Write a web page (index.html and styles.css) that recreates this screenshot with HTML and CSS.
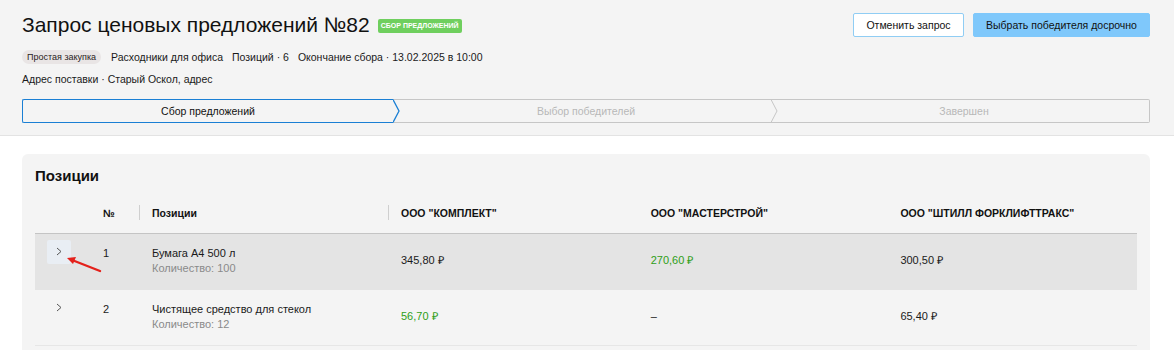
FILE: index.html
```html
<!DOCTYPE html>
<html lang="ru">
<head>
<meta charset="utf-8">
<title>Запрос ценовых предложений №82</title>
<link rel="stylesheet" href="styles.css">
</head>
<body>
<header class="head">
  <div class="title-row">
    <div class="title-wrap">
      <h1 class="title">Запрос ценовых предложений №82</h1>
      <span class="badge">СБОР ПРЕДЛОЖЕНИЙ</span>
    </div>
    <div class="actions">
      <button class="btn btn-outline">Отменить запрос</button>
      <button class="btn btn-primary">Выбрать победителя досрочно</button>
    </div>
  </div>
  <div class="meta">
    <span class="tag">Простая закупка</span>
    <span>Расходники для офиса</span>
    <span>Позиций · 6</span>
    <span>Окончание сбора · 13.02.2025 в 10:00</span>
  </div>
  <div class="address">Адрес поставки · Старый Оскол, адрес</div>
  <div class="stepper">
    <div class="step step-active">Сбор предложений</div>
    <svg class="sep" width="8" height="24" viewBox="0 0 8 24"><line x1="0" y1="0.5" x2="8" y2="0.5" stroke="#c6c6c6"/><line x1="0" y1="23.5" x2="8" y2="23.5" stroke="#c6c6c6"/><polyline points="0,0.5 6,12 0,23.5" fill="none" stroke="#1a7fd4" stroke-width="1.3"/></svg>
    <div class="step">Выбор победителей</div>
    <svg class="sep" width="8" height="24" viewBox="0 0 8 24"><line x1="0" y1="0.5" x2="8" y2="0.5" stroke="#c6c6c6"/><line x1="0" y1="23.5" x2="8" y2="23.5" stroke="#c6c6c6"/><polyline points="0,0.5 6,12 0,23.5" fill="none" stroke="#c6c6c6" stroke-width="1"/></svg>
    <div class="step step-last">Завершен</div>
  </div>
</header>
<main class="content">
  <section class="card">
    <h2 class="card-title">Позиции</h2>
    <table class="tbl">
      <colgroup>
        <col class="c-exp"><col class="c-num"><col class="c-name"><col class="c-sup"><col class="c-sup"><col class="c-sup">
      </colgroup>
      <thead>
        <tr>
          <th></th>
          <th><span class="th-in">№</span></th>
          <th class="div-l"><span class="th-in">Позиции</span></th>
          <th class="div-l"><span class="th-in">ООО "КОМПЛЕКТ"</span></th>
          <th><span class="th-in">ООО "МАСТЕРСТРОЙ"</span></th>
          <th><span class="th-in">ООО "ШТИЛЛ ФОРКЛИФТТРАКС"</span></th>
        </tr>
      </thead>
      <tbody>
        <tr class="row-hl">
          <td class="exp">
            <span class="exp-btn exp-btn-active"><svg width="6" height="9" viewBox="0 0 6 9"><polyline points="1,1 5,4.5 1,8" fill="none" stroke="#555" stroke-width="1"/></svg></span>
            <svg class="annot" width="40" height="20" viewBox="0 0 40 20"><line x1="36" y1="17" x2="8" y2="6" stroke="#e4211b" stroke-width="2.4" stroke-linecap="round"/><polygon points="3,4 12,3 9,10" fill="#e4211b"/></svg>
          </td>
          <td class="num">1</td>
          <td class="name"><div>Бумага А4 500 л</div><div class="qty">Количество: 100</div></td>
          <td class="price">345,80 ₽</td>
          <td class="price best">270,60 ₽</td>
          <td class="price">300,50 ₽</td>
        </tr>
        <tr>
          <td class="exp">
            <span class="exp-btn"><svg width="6" height="9" viewBox="0 0 6 9"><polyline points="1,1 5,4.5 1,8" fill="none" stroke="#555" stroke-width="1"/></svg></span>
          </td>
          <td class="num">2</td>
          <td class="name"><div>Чистящее средство для стекол</div><div class="qty">Количество: 12</div></td>
          <td class="price best">56,70 ₽</td>
          <td class="price">–</td>
          <td class="price">65,40 ₽</td>
        </tr>
      </tbody>
    </table>
  </section>
</main>
</body>
</html>
```
FILE: styles.css
```css
* { box-sizing: border-box; }
html, body { margin: 0; padding: 0; }
body {
  font-family: "Liberation Sans", Arial, sans-serif;
  color: #1a1a1a;
  background: #ffffff;
  font-size: 11px;
}
.head {
  background: #f4f4f4;
  border-bottom: 1px solid #e3e3e3;
  padding: 12px 24px 12px 22px;
}
.title-row {
  display: flex;
  justify-content: space-between;
  align-items: flex-start;
}
.title-wrap {
  display: flex;
  align-items: center;
  gap: 8px;
}
.title {
  margin: 0;
  font-size: 21px;
  font-weight: 400;
  line-height: 26px;
  color: #111;
}
.badge {
  background: #6fcf5e;
  color: #fff;
  font-size: 7px;
  font-weight: 700;
  line-height: 14px;
  padding: 0 3px;
  border-radius: 2px;
  margin-top: 2px;
}
.actions {
  display: flex;
  gap: 9px;
  padding-top: 1px;
}
.btn {
  font-family: inherit;
  font-size: 10.5px;
  height: 24px;
  border-radius: 2px;
  color: #111;
  cursor: pointer;
}
.btn-outline {
  background: #fff;
  border: 1px solid #90cdf4;
  width: 111px;
}
.btn-primary {
  background: #7fc8fb;
  border: 1px solid #7fc8fb;
  width: 177px;
}
.meta {
  display: flex;
  align-items: center;
  gap: 9px;
  margin-top: 11px;
  height: 16px;
  font-size: 10.5px;
}
.tag {
  background: #e9e5e5;
  color: #2a2222;
  font-size: 9px;
  line-height: 14px;
  padding: 0 5px;
  border-radius: 7px;
  margin-right: 1px;
}
.address {
  margin-top: 6px;
  line-height: 16px;
  font-size: 10.5px;
}
.stepper {
  display: flex;
  margin-top: 12px;
  height: 24px;
}
.step {
  flex: 1;
  display: flex;
  align-items: center;
  justify-content: center;
  border-top: 1px solid #c6c6c6;
  border-bottom: 1px solid #c6c6c6;
  color: #b8b8b8;
  font-size: 10.5px;
}
.step-active {
  border: 1.3px solid #1a7fd4;
  border-right: 0;
  border-radius: 2px 0 0 2px;
  color: #111;
}
.step-last {
  border-right: 1px solid #c6c6c6;
  border-radius: 0 2px 2px 0;
}
.sep { flex: none; display: block; }
.content {
  padding: 18px 24px 0 22px;
}
.card {
  background: #f4f4f4;
  border-radius: 6px;
  padding: 12px 13px 20px;
}
.card-title {
  margin: 0 0 7px;
  font-size: 15px;
  line-height: 20px;
  font-weight: 700;
  color: #111;
}
.tbl {
  width: 100%;
  border-collapse: collapse;
  table-layout: fixed;
}
.c-exp { width: 55px; }
.c-num { width: 49px; }
.c-name { width: 249px; }
.c-sup { width: 249.7px; }
.tbl th {
  height: 40px;
  text-align: left;
  font-weight: 700;
  font-size: 10.5px;
  padding: 0 13px;
  border-bottom: 1px solid #c4c4c4;
  color: #111;
}
.tbl th.div-l { background: linear-gradient(#cfcfcf, #cfcfcf) no-repeat left center / 1px 15px; }
.tbl td {
  vertical-align: top;
  padding: 12px 13px 13px;
  font-size: 11px;
  line-height: 15px;
  border-bottom: 1px solid #e6e6e6;
}
.row-hl td { background: #e4e4e4; border-bottom-color: #e4e4e4; }
.tbl td.exp {
  padding: 6px 0 0 12px;
  position: relative;
}
.exp-btn {
  display: flex;
  align-items: center;
  justify-content: center;
  width: 24px;
  height: 24px;
  border-radius: 2px;
}
.exp-btn-active { background: #e9eef4; }
.annot {
  position: absolute;
  left: 29px;
  top: 20px;
}
.num { font-weight: 400; }
.qty { color: #8a8a8a; }
.tbl td.price { vertical-align: middle; }
.best { color: #2f9e17; }
```
